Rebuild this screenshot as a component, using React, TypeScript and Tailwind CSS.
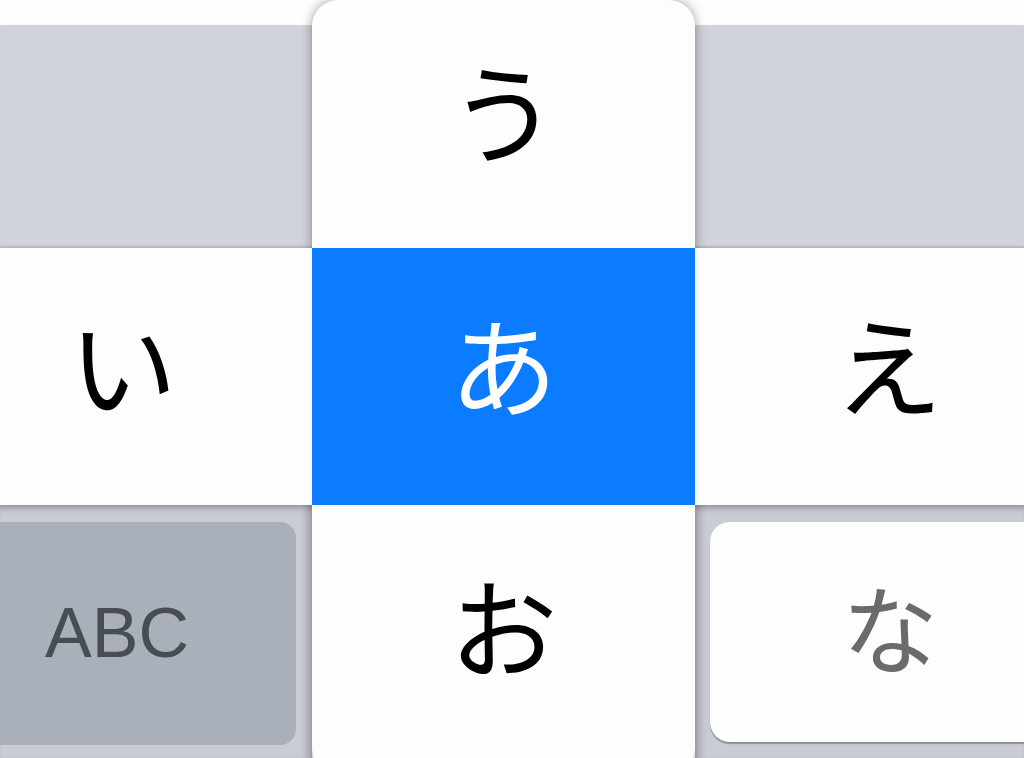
import React from "react";

const jp = { fontFamily: '"Noto Sans CJK JP", "Noto Sans", sans-serif' };

export default function App() {
  return (
    <div className="w-[1024px] h-[758px] overflow-hidden bg-[#fefefe] grid grid-cols-[312px_383px_329px] grid-rows-[25px_223px_257px_253px]">
      {/* row 1 */}
      <div className="col-start-1 row-start-1 bg-[#fefefe]" />
      <div className="col-start-3 row-start-1 bg-[#fefefe]" />

      {/* row 2 grey */}
      <div className="col-start-1 row-start-2 bg-[#d0d3d9] shadow-[inset_0_-3px_2px_-1px_#b3b6bc]" />
      <div className="col-start-3 row-start-2 bg-[#d0d3d9] shadow-[inset_0_-3px_2px_-1px_#b3b6bc]" />

      {/* center popup */}
      <div
        className="col-start-2 row-start-1 row-span-4 self-start h-[772px] relative z-0 flex flex-col bg-[#fdfdfd] rounded-t-[26px] rounded-b-[24px] shadow-[0_0_12px_rgba(0,0,0,0.38)] overflow-hidden"
        style={jp}
      >
        <div className="h-[248px] shrink-0 flex items-center justify-center pb-[32px] text-[108px] leading-none text-black">
          う
        </div>
        <div className="h-[257px] shrink-0 bg-[#0b7bff] flex items-center justify-center pb-[30px] text-[108px] leading-none text-white">
          あ
        </div>
        <div className="flex-1 flex items-start justify-center pt-[64px] text-[108px] leading-none text-black">
          お
        </div>
      </div>

      {/* row 3 white keys */}
      <div
        className="col-start-1 row-start-3 relative z-10 bg-[#fdfdfd] flex items-center justify-center pr-[66px] pb-[30px] text-[108px] leading-none text-black"
        style={jp}
      >
        い
      </div>
      <div
        className="col-start-3 row-start-3 relative z-10 bg-[#fdfdfd] flex items-center justify-center pl-[58px] pb-[30px] text-[108px] leading-none text-black"
        style={jp}
      >
        え
      </div>

      {/* row 4 */}
      <div className="col-start-1 row-start-4 relative z-10 bg-[#c9ccd2] shadow-[inset_0_7px_6px_-4px_rgba(0,0,0,0.28),inset_-10px_0_8px_-6px_rgba(0,0,0,0.25)] pt-[17px] pb-[13px] overflow-hidden">
        <div
          className="ml-[-62px] w-[358px] h-full rounded-[16px] bg-[#aab0ba] flex items-center justify-center text-[70px] leading-none text-[#484c53] pb-[2px]"
          style={{ fontFamily: '"Liberation Sans", Arial, sans-serif' }}
        >
          ABC
        </div>
      </div>
      <div className="col-start-3 row-start-4 relative z-10 bg-[#c9ccd2] shadow-[inset_0_7px_6px_-4px_rgba(0,0,0,0.28),inset_10px_0_8px_-6px_rgba(0,0,0,0.25)] pt-[17px] pl-[15px] pb-[16px] overflow-hidden">
        <div
          className="w-[360px] h-full rounded-[20px] bg-[#fdfdfd] shadow-[0_2px_1px_rgba(0,0,0,0.3)] flex items-center justify-center pb-[14px] text-[96px] leading-none text-[#6b6b6b]"
          style={jp}
        >
          な
        </div>
      </div>
    </div>
  );
}
